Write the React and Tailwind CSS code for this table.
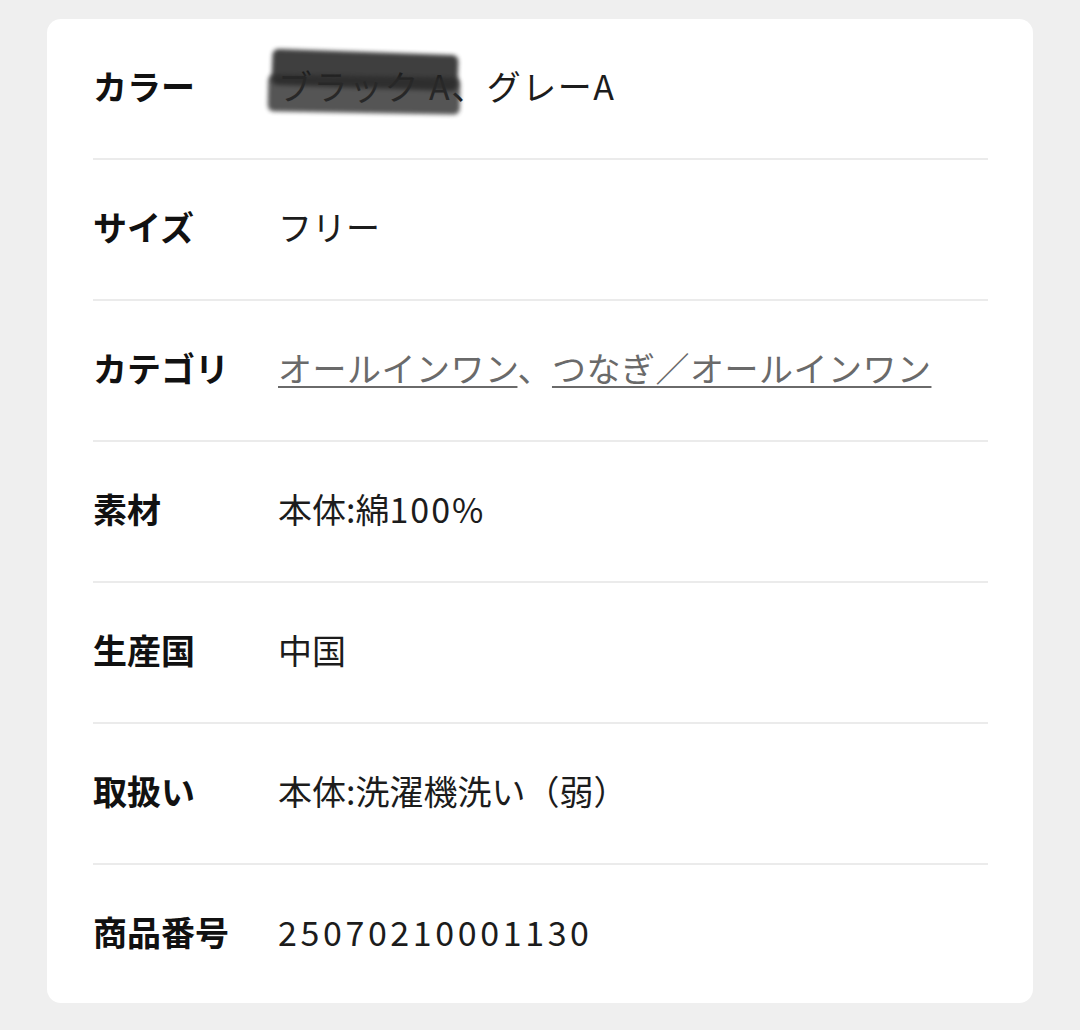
import React from 'react';

const rows = [
  { label: 'カラー', redacted: true },
  { label: 'サイズ', value: 'フリー' },
  { label: 'カテゴリ', links: ['オールインワン', 'つなぎ／オールインワン'] },
  { label: '素材', value: <>本体:綿<span className="tracking-[2px]">100%</span></> },
  { label: '生産国', value: '中国' },
  { label: '取扱い', value: '本体:洗濯機洗い（弱）' },
  { label: '商品番号', value: <span className="tracking-[3.6px]">25070210001130</span> },
];

const Scribble = () => (
  <div className="pointer-events-none absolute left-[-10px] top-[-37px] h-[70px] w-[194px]">
    <div className="absolute left-[4px] top-[3px] h-[36px] w-[186px] rotate-[2deg] rounded-[6px] bg-[#1e1e1e] opacity-85 blur-[2px]" />
    <div className="absolute left-[0px] top-[27px] h-[37px] w-[192px] rotate-[1deg] rounded-[6px] bg-[#2b2b2b] opacity-80 blur-[2px]" />
  </div>
);

const Row = ({ row, last }) => (
  <div className={`flex items-center pb-[6px] ${last ? 'h-[138px]' : 'h-[141px] border-b-2 border-[#ebebeb]'}`}>
    <div className="w-[185px] shrink-0 text-[34px] font-bold text-[#111]">{row.label}</div>
    <div className="text-[34px] text-[#1c1c1c]">
      {row.links ? (
        <span className="tracking-[0.5px] text-[#6a6a6a]">
          <span className="underline decoration-2 underline-offset-[4px]">{row.links[0]}</span>
          、
          <span className="underline decoration-2 underline-offset-[4px]">{row.links[1]}</span>
        </span>
      ) : row.redacted ? (
        <span className="relative tracking-[1.5px]">
          <span className="relative">ブラック A</span>
          <span className="absolute left-0 top-1/2"><Scribble /></span>
          、グレーA
        </span>
      ) : (
        row.value
      )}
    </div>
  </div>
);

export default function App() {
  return (
    <div
      className="min-h-[1030px] bg-[#efefef] pl-[47px] pr-[47px] pt-[19px] pb-[27px]"
      style={{ fontFamily: '"Noto Sans CJK JP", "Noto Sans", sans-serif' }}
    >
      <div className="rounded-[14px] bg-white pl-[46px] pr-[45px]">
        {rows.map((row, i) => (
          <Row key={row.label} row={row} last={i === rows.length - 1} />
        ))}
      </div>
    </div>
  );
}
